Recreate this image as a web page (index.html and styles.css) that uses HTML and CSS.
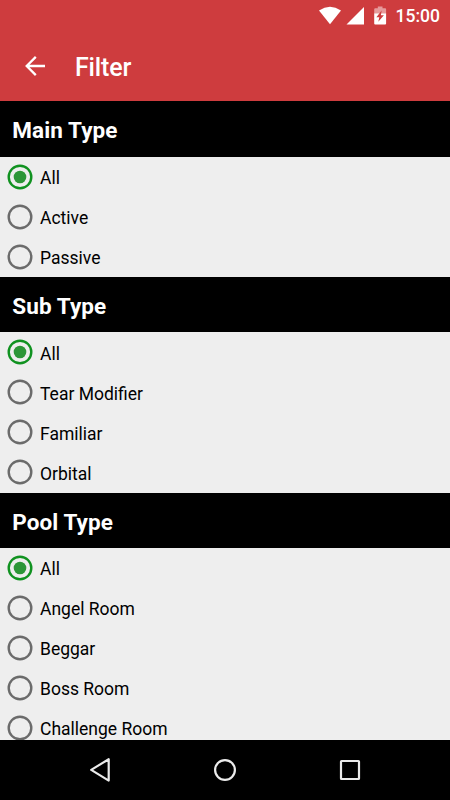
FILE: index.html
```html
<!DOCTYPE html>
<html lang="en">
<head>
<meta charset="utf-8">
<title>Filter</title>
<link rel="stylesheet" href="styles.css">
</head>
<body>
<svg width="0" height="0" class="defs">
  <symbol id="off" viewBox="0 0 26 26"><circle cx="13" cy="13" r="11.300" fill="none" stroke="#6b6b6b" stroke-width="2.400"/></symbol>
  <symbol id="on" viewBox="0 0 26 26"><circle cx="13" cy="13" r="11.300" fill="none" stroke="#109220" stroke-width="2.400"/><circle cx="13" cy="13" r="6.300" fill="#2c9637"/></symbol>
</svg>
<div class="screen">
  <header class="top">
    <div class="status">
      <svg class="status-icons" width="70" height="32" viewBox="0 0 70 32">
        <path fill="#fff" d="M0 10.400Q11 3 22 10.400L11 24.300Z"/>
        <path fill="#fff" d="M27.500 24.500L45 6.900V24.500Z"/>
        <path fill="#e69a9b" d="M55.200 14V9.300Q55.200 8.300 56.200 8.300H58.800V6.500H63.500V8.300H66.100Q67.100 8.300 67.100 9.300V14Z"/>
        <path fill="#fff" d="M55.200 13.500H67.100V23.500Q67.100 24.500 66.100 24.500H56.200Q55.200 24.500 55.200 23.500Z"/>
        <path fill="#ce3c3e" d="M62.600 10.500L57.400 17.300H60.300L59.300 21.700L64.900 15.200H61.900Z"/>
      </svg>
      <span class="clock">15:00</span>
    </div>
    <div class="toolbar">
      <svg class="back" width="20" height="20" viewBox="0 0 20 20"><path fill="none" stroke="#fff" stroke-width="2.300" d="M20 10H2M10.800 .900L1.700 10L10.800 19.100"/></svg>
      <h1 class="title">Filter</h1>
    </div>
  </header>
  <main class="list">
    <h2 class="section">Main Type</h2>
    <label class="row"><svg class="radio"><use href="#on"/></svg><span class="label">All</span></label>
    <label class="row"><svg class="radio"><use href="#off"/></svg><span class="label">Active</span></label>
    <label class="row"><svg class="radio"><use href="#off"/></svg><span class="label">Passive</span></label>
    <h2 class="section">Sub Type</h2>
    <label class="row"><svg class="radio"><use href="#on"/></svg><span class="label">All</span></label>
    <label class="row"><svg class="radio"><use href="#off"/></svg><span class="label">Tear Modifier</span></label>
    <label class="row"><svg class="radio"><use href="#off"/></svg><span class="label">Familiar</span></label>
    <label class="row"><svg class="radio"><use href="#off"/></svg><span class="label">Orbital</span></label>
    <h2 class="section">Pool Type</h2>
    <label class="row"><svg class="radio"><use href="#on"/></svg><span class="label">All</span></label>
    <label class="row"><svg class="radio"><use href="#off"/></svg><span class="label">Angel Room</span></label>
    <label class="row"><svg class="radio"><use href="#off"/></svg><span class="label">Beggar</span></label>
    <label class="row"><svg class="radio"><use href="#off"/></svg><span class="label">Boss Room</span></label>
    <label class="row"><svg class="radio"><use href="#off"/></svg><span class="label">Challenge Room</span></label>
  </main>
  <nav class="nav">
    <svg width="24" height="26" viewBox="0 0 24 26"><path fill="none" stroke="#ebebeb" stroke-width="2.200" stroke-linejoin="round" d="M20.700 2.200V23.600L3.200 12.900Z"/></svg>
    <svg width="24" height="26" viewBox="0 0 24 26"><circle cx="12" cy="13" r="9.900" fill="none" stroke="#ebebeb" stroke-width="2.200"/></svg>
    <svg width="24" height="26" viewBox="0 0 24 26"><rect x="3" y="4" width="18" height="18" rx=".500" fill="none" stroke="#ebebeb" stroke-width="2.200"/></svg>
  </nav>
</div>
</body>
</html>
```
FILE: styles.css
```css
* { box-sizing: border-box; }
body {
  margin: 0;
  font-family: Roboto, sans-serif;
}
.defs { display: none; }
.screen {
  display: flex;
  flex-direction: column;
  width: 450px;
  height: 800px;
  overflow: hidden;
  background: #eee;
}
.top {
  flex: none;
  height: 101.4px;
  background: #ce3c3e;
  color: #fff;
}
.status {
  display: flex;
  justify-content: flex-end;
  height: 32px;
  padding-right: 10px;
}
.status-icons { margin-right: 6.6px; }
.clock {
  font-size: 17.5px;
  font-weight: 500;
  line-height: 33px;
}
.toolbar {
  display: flex;
  align-items: center;
  height: 69px;
  padding-left: 25px;
}
.back { margin-top: -1px; }
.title {
  margin: 3px 0 0 30px;
  font-size: 25px;
  font-weight: 500;
  letter-spacing: -0.15px;
  line-height: 30px;
}
.list {
  flex: 1;
  min-height: 0;
  overflow: hidden;
}
.section {
  height: 55.4px;
  margin: 0;
  padding-left: 12.3px;
  background: #000;
  color: #fff;
  font-size: 22.5px;
  font-weight: 700;
  letter-spacing: 0.08px;
  line-height: 58px;
}
.row {
  display: flex;
  align-items: center;
  height: 40.05px;
  padding-left: 7px;
}
.radio {
  flex: none;
  width: 26px;
  height: 26px;
}
.label {
  margin: 2.4px 0 0 7px;
  color: #000;
  font-size: 17.5px;
  line-height: 24px;
}
.nav {
  flex: none;
  display: flex;
  align-items: center;
  justify-content: center;
  gap: 101px;
  height: 60px;
  background: #000;
}
```
